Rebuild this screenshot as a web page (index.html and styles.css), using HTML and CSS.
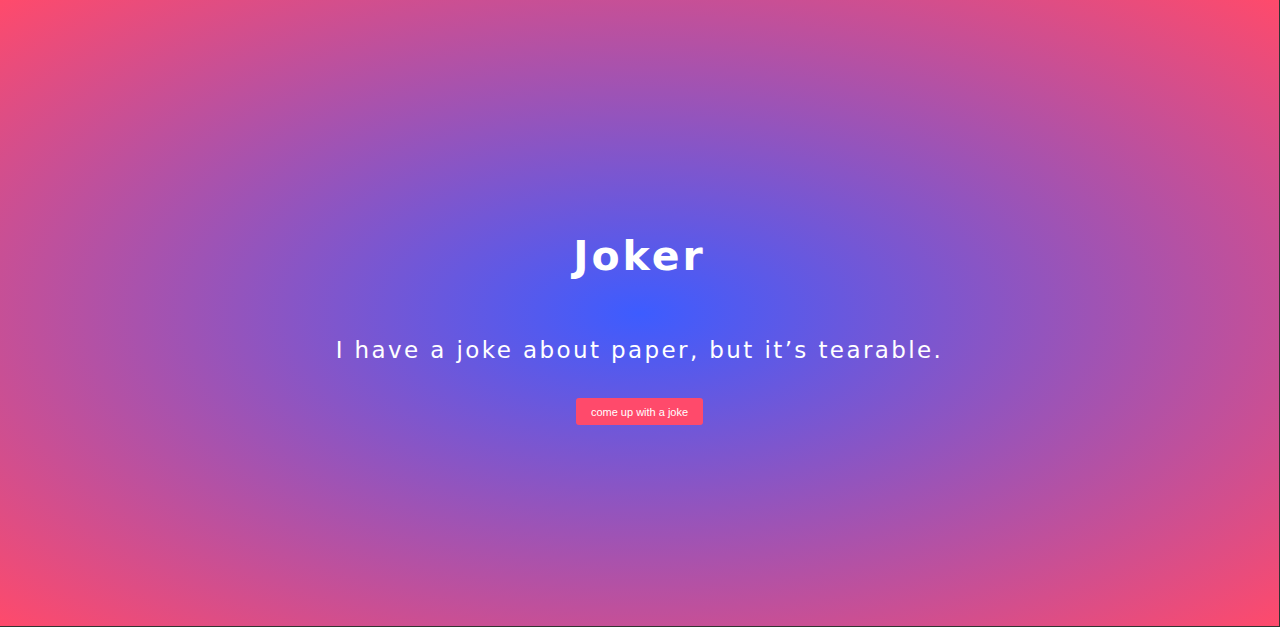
FILE: index.html
```html
<!DOCTYPE html>
<html lang="en">
<head>
<meta charset="utf-8">
<title>Joker</title>
<link rel="stylesheet" href="styles.css">
</head>
<body>
<main class="page">
  <h1 class="title">Joker</h1>
  <p class="joke">I have a joke about paper, but it’s tearable.</p>
  <button class="btn" type="button">come up with a joke</button>
</main>
</body>
</html>
```

FILE: styles.css
```css
* { box-sizing: border-box; }
html, body { margin: 0; padding: 0; height: 100%; }
body {
  background: radial-gradient(ellipse at center, #3d5cff 0%, #ff4a6b 100%);
  font-family: "DejaVu Sans", "Liberation Sans", sans-serif;
  color: #fff;
  border-right: 1px solid #333;
  border-bottom: 1px solid #333;
}
.page {
  height: 100%;
  display: flex;
  flex-direction: column;
  align-items: center;
  padding-top: 232px;
}
.title {
  margin: 0;
  font-size: 41px;
  font-weight: 700;
  letter-spacing: 3px;
  line-height: 48px;
}
.joke {
  margin: 55px 0 0;
  font-size: 23px;
  letter-spacing: 2.4px;
  line-height: 30px;
}
.btn {
  margin-top: 33px;
  background: #ff4a6b;
  color: #fff;
  border: none;
  border-radius: 3px;
  font-family: "Liberation Sans", Arial, sans-serif;
  font-size: 11px;
  height: 27px;
  padding: 0 15px;
  cursor: pointer;
}
```
